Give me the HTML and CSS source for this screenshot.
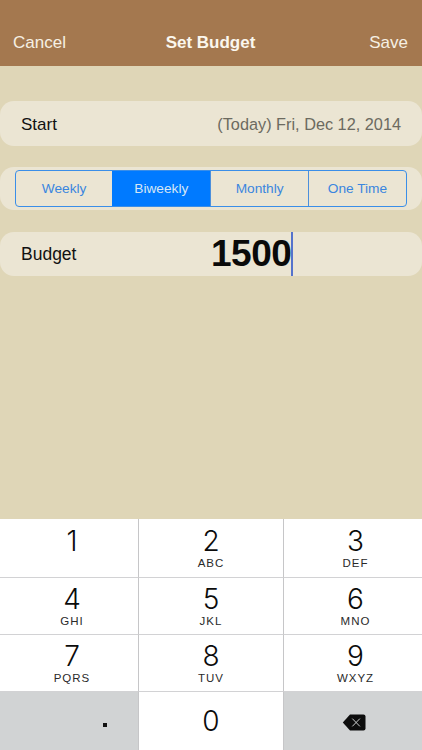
FILE: index.html
```html
<!DOCTYPE html>
<html lang="en">
<head>
<meta charset="utf-8">
<title>Set Budget</title>
<link rel="stylesheet" href="styles.css">
</head>
<body>
<div class="app">
  <header class="nav">
    <span class="nav-btn">Cancel</span>
    <span class="nav-title">Set Budget</span>
    <span class="nav-btn nav-save">Save</span>
  </header>
  <main class="form">
    <div class="row row-start">
      <span class="label">Start</span>
      <span class="date">(Today) Fri, Dec 12, 2014</span>
    </div>
    <div class="seg-wrap">
      <div class="seg">
        <span class="seg-item">Weekly</span>
        <span class="seg-item active">Biweekly</span>
        <span class="seg-item">Monthly</span>
        <span class="seg-item">One Time</span>
      </div>
    </div>
    <div class="row row-budget">
      <span class="label">Budget</span>
      <span class="amount">1500<span class="caret"></span></span>
    </div>
  </main>
  <section class="keyboard">
    <div class="key key-r1 key-first"><span class="num">1</span></div>
    <div class="key key-r1"><span class="num">2</span><span class="sub">ABC</span></div>
    <div class="key key-r1 key-last"><span class="num">3</span><span class="sub">DEF</span></div>
    <div class="key key-first"><span class="num">4</span><span class="sub">GHI</span></div>
    <div class="key"><span class="num">5</span><span class="sub">JKL</span></div>
    <div class="key key-last"><span class="num">6</span><span class="sub">MNO</span></div>
    <div class="key key-first"><span class="num">7</span><span class="sub">PQRS</span></div>
    <div class="key"><span class="num">8</span><span class="sub">TUV</span></div>
    <div class="key key-last"><span class="num">9</span><span class="sub">WXYZ</span></div>
    <div class="key key-bottom key-grey key-dot"><span class="dot"></span></div>
    <div class="key key-bottom key-zero"><span class="num">0</span></div>
    <div class="key key-bottom key-grey key-del">
      <svg class="del" width="24" height="17" viewBox="0 0 24 17" aria-hidden="true">
        <path d="M8 .5H21.5a2 2 0 0 1 2 2v12a2 2 0 0 1-2 2H8L.8 8.5z" fill="#0d0d0d"/>
        <path d="M10.3 4.6l7.6 7.8M17.9 4.6l-7.6 7.8" stroke="#c9cbcb" stroke-width="1" fill="none"/>
      </svg>
    </div>
  </section>
</div>
</body>
</html>
```
FILE: styles.css
```css
* { box-sizing: border-box; }
html, body { margin: 0; padding: 0; }
body { font-family: "Liberation Sans", Arial, sans-serif; background: #dfd6b7; }
.app { width: 422px; height: 750px; display: flex; flex-direction: column; overflow: hidden; }

.nav {
  height: 66px; flex: none; background: #a4784f; color: #f6f0e4;
  display: grid; grid-template-columns: 1fr auto 1fr; align-items: end;
  padding: 0 14px 13px 13px; font-size: 17px; line-height: 20px;
}
.nav-title { font-weight: 700; color: #fbf7ee; }
.nav-save { justify-self: end; }

.form { flex: 1; background: #dfd6b7; padding-top: 35px; display: flex; flex-direction: column; }
.row {
  background: #ebe5d3; border-radius: 14px; display: flex; align-items: center;
  padding: 0 21px; position: relative; color: #111;
  font-size: 17px;
}
.row-start { height: 45px; justify-content: space-between; padding-top: 2px; }
.date { color: #6c6a60; font-size: 16.3px; }
.seg-wrap {
  margin-top: 21px; height: 43px; background: #ebe5d3; border-radius: 14px;
  padding: 3px 15px;
}
.seg {
  display: grid; grid-template-columns: 96.3px 98px 97.6px 1fr; height: 37px;
  border: 1.4px solid #3a8ee8; border-radius: 4px; overflow: hidden;
  font-size: 13.7px; color: #3a86df;
}
.seg-item { display: flex; align-items: center; justify-content: center; border-left: 1.2px solid #4b8fdc; }
.seg-item:first-child { border-left: 0; }
.seg-item.active { background: #007aff; color: #d6e6f5; border-left: 0; }
.row-budget { margin-top: 22px; height: 44px; padding-top: 1px; font-size: 17.5px; }
.amount {
  position: absolute; left: 211px; top: 0; height: 44px;
  font-size: 37px; font-weight: 700; color: #0a0a0a; line-height: 44px; letter-spacing: -.5px;
}
.caret { position: absolute; right: -1.5px; top: 0; width: 2px; height: 44px; background: #5573cc; }

.keyboard {
  flex: none; height: 231px; background: #fff;
  display: grid; grid-template-columns: 139px 145px 138px; grid-template-rows: 59px 57px 57px 58px;
  color: #0b0b0b;
}
.key {
  display: flex; flex-direction: column; align-items: center;
  border-right: 1px solid #c6c6c8; border-bottom: 1px solid #d2d2d4;
  padding-top: 6px;
}
.key-r1 { padding-top: 7px; }
.key-first { padding-left: 6px; }
.key-last { border-right: 0; padding-left: 5px; }
.key-bottom { border-bottom: 0; }
.key-grey { background: #d1d3d4; }
.key-zero { padding-top: 14px; }
.num { font-family: Inter, "Liberation Sans", sans-serif; font-weight: 300; font-size: 28px; line-height: 31px; }
.sub { font-size: 11.5px; line-height: 13px; letter-spacing: 1px; color: #2a2a2a; }
.key-dot { position: relative; }
.dot { position: absolute; left: 103px; top: 31px; width: 4px; height: 4px; background: #111; }
.key-del { padding-top: 22px; border-right: 0; padding-left: 1px; }
.del { display: block; }
```
